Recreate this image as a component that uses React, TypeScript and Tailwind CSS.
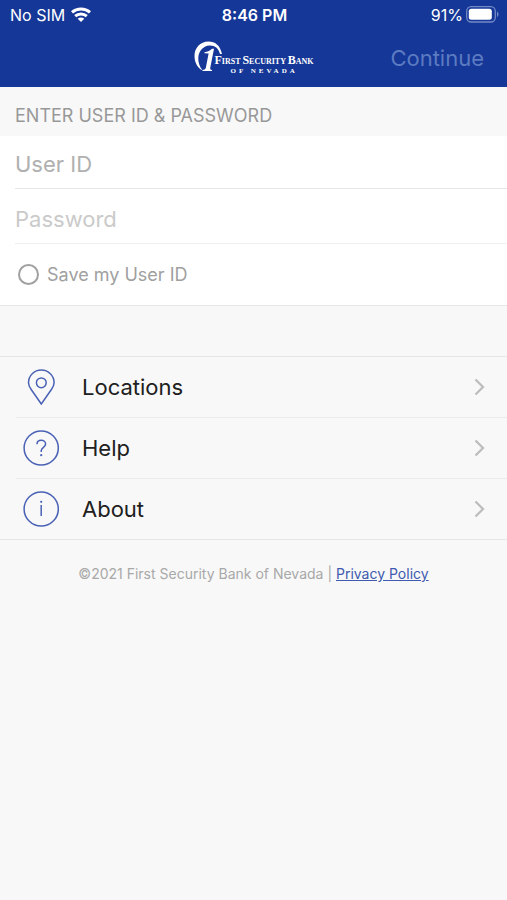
import type { ReactNode } from 'react';

function WifiIcon() {
  return (
    <svg viewBox="0 0 20 15" className="h-[15px] w-5" fill="none" stroke="white" strokeWidth="3" aria-hidden="true">
      <path d="M1 5.400C6 .9 14 .9 19 5.400" />
      <path d="M4.200 9.200C7.500 6.200 12.500 6.200 15.800 9.200" />
      <path d="M6.700 11.700C8.600 10.200 11.400 10.200 13.300 11.700L10 15Z" fill="white" stroke="none" />
    </svg>
  );
}

function BatteryIcon() {
  return (
    <svg viewBox="0 0 33 17" className="h-[17px] w-[33px]" aria-hidden="true">
      <rect x=".7" y=".7" width="28.600" height="15.300" rx="4.500" fill="none" stroke="#7489c6" strokeWidth="1.300" />
      <rect x="2.800" y="2.800" width="23" height="11" rx="2.500" fill="white" />
      <path d="M31 5.500C33 6.500 33 10 31 11Z" fill="#7489c6" />
    </svg>
  );
}

function BankLogo() {
  return (
    <div className="flex items-start text-white" role="img" aria-label="First Security Bank of Nevada">
      <svg viewBox="0 0 29 31" className="-mr-2 h-[31px] w-[29px] shrink-0" fill="white" aria-hidden="true">
        <path d="M28 13C26 4 21 .5 14.500 .5C6 .5 .5 7 .5 15C.5 22 4 27.500 8.500 29.200C5.500 26 4 21 4.300 16.500C4.900 9.500 9.500 5 15.500 4.500C20.500 4.200 24.500 7 26 13Z" />
        <path d="M20 7.800L16.300 26.500C16 28.300 16.200 28.700 18 28.900V30H8.500V28.900C10.800 28.700 11.500 28.200 11.900 26.500L14.600 12.500L10.500 12.300V11.200C14 10.800 16 9.800 18 7.800Z" />
      </svg>
      <div className="pt-[13px] font-['Liberation_Serif',serif] font-bold">
        <div className="text-[8px] leading-3 whitespace-nowrap">
          <span className="text-xs leading-3">F</span>IRST <span className="text-xs leading-3">S</span>ECURITY{' '}
          <span className="text-xs leading-3">B</span>ANK
        </div>
        <div className="pl-4 text-[7px] leading-[7px] tracking-[3px] whitespace-nowrap">OF NEVADA</div>
      </div>
    </div>
  );
}

function PinIcon() {
  return (
    <svg viewBox="0 0 36 36" className="size-9" fill="none" stroke="#4a62b5" strokeWidth="1.500" aria-hidden="true">
      <path d="M18.300 35L8.200 20.500C6.500 18 5.500 16 5.500 13.700C5.500 6.600 11.200 1 18.300 1S31.100 6.600 31.100 13.700C31.100 16 30.100 18 28.400 20.500Z" />
      <circle cx="18.300" cy="13.800" r="4.900" />
    </svg>
  );
}

function HelpIcon() {
  return (
    <svg viewBox="0 0 36 36" className="size-9" fill="none" stroke="#4a62b5" strokeWidth="1.500" aria-hidden="true">
      <circle cx="18.200" cy="18" r="17.100" />
      <path d="M14 14.200C14 11.800 15.700 10.300 18.200 10.300S22.600 11.900 22.600 14.100C22.600 17.300 18.200 17.400 18.200 20.800V22" />
      <circle cx="18.200" cy="25.200" r="1.100" fill="#4a62b5" stroke="none" />
    </svg>
  );
}

function InfoIcon() {
  return (
    <svg viewBox="0 0 36 36" className="size-9" fill="none" stroke="#4a62b5" strokeWidth="1.500" aria-hidden="true">
      <circle cx="18.200" cy="18" r="17.100" />
      <path d="M18.200 14V25" />
      <circle cx="18.200" cy="10.800" r="1.100" fill="#4a62b5" stroke="none" />
    </svg>
  );
}

function MenuRow({ icon, label, last = false }: { icon: ReactNode; label: string; last?: boolean }) {
  return (
    <li className={last ? '' : 'ml-4 border-b border-[#ebebeb]'}>
      <a href="#" className={last ? 'flex h-[60px] items-center pr-[22px] pl-[23px]' : 'flex h-[60px] items-center pr-[22px] pl-[7px]'}>
        {icon}
        <span className="ml-[23px] flex-1 text-[22px] leading-7 text-[#202020]">{label}</span>
        <svg viewBox="0 0 11 18" className="h-[18px] w-[11px]" fill="none" stroke="#bdbdbd" strokeWidth="2.300" aria-hidden="true">
          <path d="M1.500 1.500L9 9L1.500 16.500" />
        </svg>
      </a>
    </li>
  );
}

export default function App() {
  return (
    <div className="min-h-screen bg-[#f8f8f8] font-[Inter,'Liberation_Sans',sans-serif]">
      <header className="h-[87px] bg-[#153797] text-white">
        <div className="grid h-[29px] grid-cols-3 items-center pr-2 pl-[10px] text-base">
          <div className="flex items-center gap-[6px]">
            <span>No SIM</span>
            <WifiIcon />
          </div>
          <div className="text-center font-semibold">8:46 PM</div>
          <div className="flex items-center justify-end gap-[3px]">
            <span>91%</span>
            <BatteryIcon />
          </div>
        </div>
        <div className="grid h-[58px] grid-cols-[1fr_auto_1fr] items-center">
          <div />
          <BankLogo />
          <button type="button" className="mr-[23px] justify-self-end text-[22px] leading-7 text-[#5c7bc2]">
            Continue
          </button>
        </div>
      </header>

      <form onSubmit={(event) => event.preventDefault()}>
        <h1 className="flex h-[49px] items-center px-[15px] pt-2 text-lg text-[#989898]">ENTER USER ID &amp; PASSWORD</h1>
        <div className="border-b border-[#e6e6e6] bg-white">
          <div className="ml-[15px] border-b border-[#e6e6e6]">
            <input
              type="text"
              aria-label="User ID"
              placeholder="User ID"
              className="block h-[52px] w-full pt-1 text-[22px] outline-none placeholder:text-[#b0b0b0]"
            />
          </div>
          <div className="ml-[15px] border-b border-[#eeeeee]">
            <input
              type="password"
              aria-label="Password"
              placeholder="Password"
              className="block h-[54px] w-full pt-[6px] text-[22px] outline-none placeholder:text-[#cacaca]"
            />
          </div>
          <label className="flex h-[61px] items-center gap-2 pl-[18px] text-lg text-[#a0a0a0]">
            <input
              type="checkbox"
              className="size-[21px] appearance-none rounded-full border-2 border-[#a0a0a0] checked:bg-[#a0a0a0]"
            />
            Save my User ID
          </label>
        </div>
      </form>

      <nav className="mt-[50px]">
        <ul className="border-y border-[#e6e6e6]">
          <MenuRow icon={<PinIcon />} label="Locations" />
          <MenuRow icon={<HelpIcon />} label="Help" />
          <MenuRow icon={<InfoIcon />} label="About" last />
        </ul>
      </nav>

      <footer className="pt-6 text-center text-sm text-[#a8a8a8]">
        ©2021 First Security Bank of Nevada |{' '}
        <a href="#" className="text-[#405aaf] underline">
          Privacy Policy
        </a>
      </footer>
    </div>
  );
}
